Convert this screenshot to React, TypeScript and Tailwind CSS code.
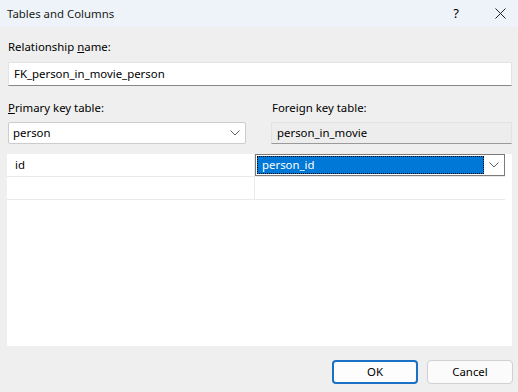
import React from 'react';

const font = { fontFamily: '"Segoe UI", "Noto Sans", "Open Sans", sans-serif' };

function Chevron({ className = '' }: { className?: string }) {
  return (
    <svg width="10" height="6" viewBox="0 0 10 6" className={className}>
      <path d="M0.5 0.5 L5 5 L9.5 0.5" fill="none" stroke="#606060" strokeWidth="1" />
    </svg>
  );
}

export default function App() {
  return (
    <div
      className="w-[518px] h-[392px] bg-[#efefef] flex flex-col text-[11.4px] text-black overflow-hidden"
      style={font}
    >
      {/* Title bar */}
      <div className="h-[27px] bg-[#eef3f9] flex items-center pl-[7px] shrink-0">
        <span className="flex-1 text-[11.4px] pt-[1px] text-[#1a1a1a]">Tables and Columns</span>
        <span className="w-[52px] text-center text-[13px]">?</span>
        <span className="w-[36px] flex justify-center">
          <svg width="11" height="11" viewBox="0 0 11 11">
            <path d="M0.5 0.5 L10.5 10.5 M10.5 0.5 L0.5 10.5" stroke="#222" strokeWidth="1" />
          </svg>
        </span>
      </div>

      <div className="flex flex-col px-[8px] pr-[6px]">
        {/* Relationship name */}
        <div className="mt-[12px] leading-[16px]">
          Relationship <span className="underline">n</span>ame:
        </div>
        <div className="mt-[7px] h-[24px] bg-white border border-[#e3e3e3] border-b-[#868686] flex items-center pl-[5px]">
          FK_person_in_movie_person
        </div>

        {/* Tables */}
        <div className="mt-[14px] flex gap-[25px]">
          <div className="w-[238px] flex flex-col">
            <div className="leading-[16px]">
              <span className="underline">P</span>rimary key table:
            </div>
            <div className="mt-[6px] h-[22px] bg-white border border-[#cccccc] rounded-[2px] flex items-center pl-[4px] pr-[5px]">
              <span className="flex-1">person</span>
              <Chevron />
            </div>
          </div>
          <div className="flex-1 flex flex-col">
            <div className="leading-[16px] pl-[1px]">Foreign key table:</div>
            <div className="mt-[6px] h-[22px] bg-[#ededed] border border-[#e3e3e3] border-b-[#9a9a9a] flex items-center pl-[5px]">
              person_in_movie
            </div>
          </div>
        </div>
      </div>

      {/* Column grid */}
      <div className="ml-[7px] mr-[6px] mt-[10px] h-[192px] bg-white flex flex-col pr-[7px]">
        <div className="flex h-[23px] border-b border-[#eaeaea]">
          <div className="w-[248px] border-r border-[#eaeaea] flex items-center pl-[8px]">id</div>
          <div className="flex-1 border border-[#7a7a7a] flex items-center p-[1px]">
            <div className="flex-1 h-full bg-[#0078d7] text-white flex items-center pl-[4px] outline-dotted outline-1 outline-[#000] -outline-offset-1 border border-dotted border-[#f2a33a]">
              person_id
            </div>
            <div className="w-[19px] flex justify-center">
              <Chevron />
            </div>
          </div>
        </div>
        <div className="flex h-[23px] border-b border-[#eaeaea]">
          <div className="w-[248px] border-r border-[#eaeaea]" />
          <div className="flex-1" />
        </div>
      </div>

      {/* Buttons */}
      <div className="mt-[14px] flex justify-end gap-[9px] pr-[5px]">
        <button className="w-[86px] h-[24px] bg-[#fdfdfd] border-2 border-[#1a70c5] rounded-[4px] text-[11.4px] leading-none">
          OK
        </button>
        <button className="w-[86px] h-[24px] bg-[#fbfbfb] border border-[#d0d0d0] rounded-[4px] text-[11.4px] leading-none">
          Cancel
        </button>
      </div>
    </div>
  );
}
